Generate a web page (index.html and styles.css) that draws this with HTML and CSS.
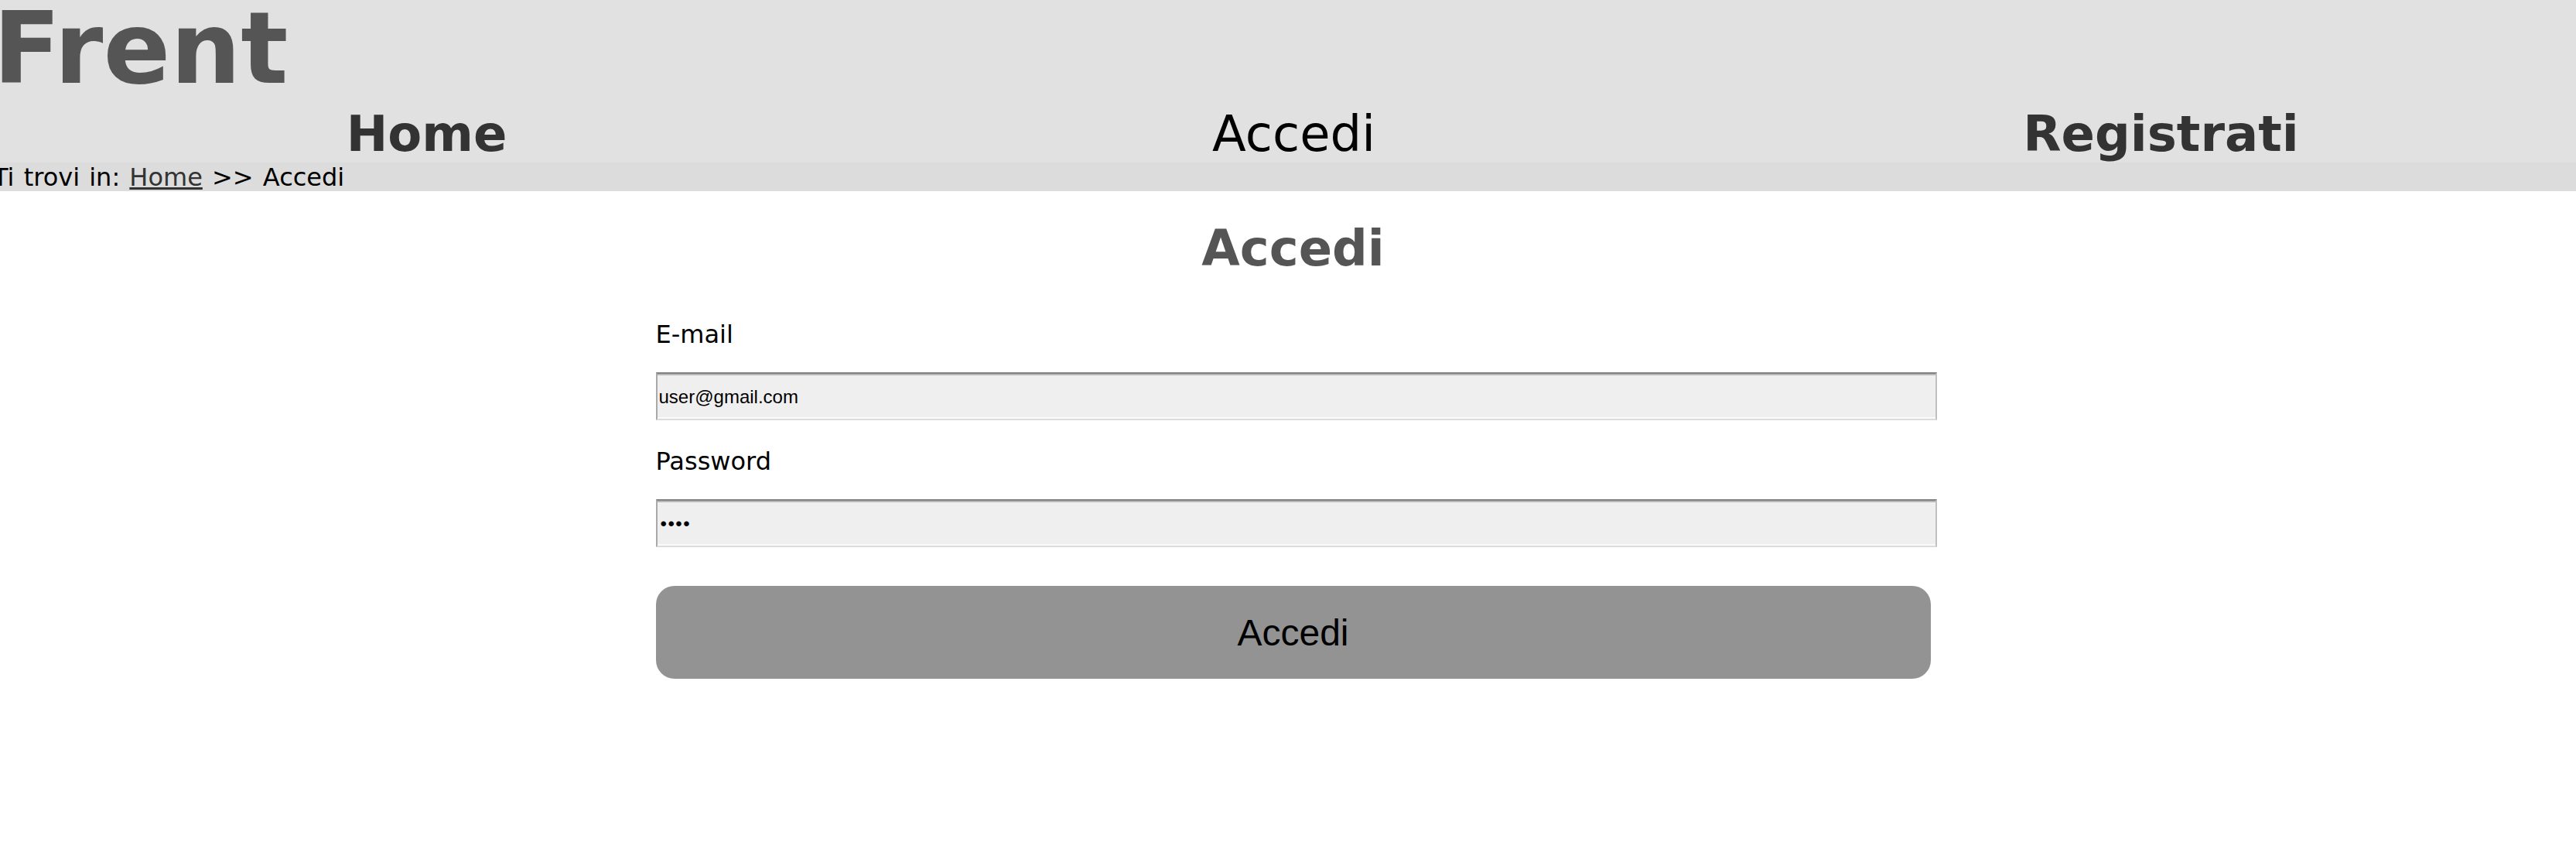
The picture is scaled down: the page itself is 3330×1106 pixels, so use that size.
FILE: index.html
```html
<!DOCTYPE html>
<html lang="it">
<head>
<meta charset="utf-8">
<title>Frent - Accedi</title>
<link rel="stylesheet" href="styles.css">
</head>
<body>
<header class="site-header">
  <h1 class="logo">Frent</h1>
  <nav class="main-nav">
    <ul class="nav-list">
      <li><a class="nav-link" href="#">Home</a></li>
      <li><span class="nav-current">Accedi</span></li>
      <li><a class="nav-link" href="#">Registrati</a></li>
    </ul>
  </nav>
  <div class="breadcrumb">Ti trovi in: <a href="#" class="crumb-link">Home</a> &gt;&gt; Accedi</div>
</header>
<main class="content">
  <h2 class="page-title">Accedi</h2>
  <form class="login-form">
    <label class="field-label" for="email">E-mail</label>
    <input class="field-input" id="email" type="email" value="user@gmail.com">
    <label class="field-label" for="password">Password</label>
    <input class="field-input field-password" id="password" type="password" value="abcd">
    <button class="submit-btn" type="button">Accedi</button>
  </form>
</main>
</body>
</html>
```
FILE: styles.css
```css
html, body {
  margin: 0;
  padding: 0;
}

body {
  font-family: "DejaVu Sans", Verdana, sans-serif;
  background: #ffffff;
  color: #000000;
  overflow-x: hidden;
}

.site-header {
  background: #e1e1e1;
  margin: 0 -24px 0 -9px;
}

.logo {
  margin: 0;
  font-size: 128px;
  line-height: 126px;
  font-weight: bold;
  color: #555555;
}

.main-nav {
  margin-top: 10px;
}

.nav-list {
  list-style: none;
  margin: 0;
  padding: 0;
  display: grid;
  grid-template-columns: repeat(3, 1fr);
  text-align: center;
  font-size: 64px;
  line-height: 74px;
}

.nav-link {
  color: #333333;
  font-weight: bold;
  text-decoration: none;
}

.nav-current {
  color: #000000;
}

.breadcrumb {
  background: #dcdcdc;
  font-size: 32px;
  line-height: 36px;
  padding-top: 1px;
  word-spacing: 2px;
}

.crumb-link {
  color: #333333;
}

.content {
  padding-left: 13px;
}

.page-title {
  margin: 37px 0 0;
  text-align: center;
  font-size: 64px;
  font-weight: bold;
  color: #555555;
  line-height: normal;
}

.login-form {
  width: 1648px;
  margin: 55px auto 0;
}

.field-label {
  display: block;
  font-size: 32px;
  line-height: normal;
  margin-bottom: 30px;
}

.field-input {
  display: block;
  box-sizing: content-box;
  width: 100%;
  height: 54px;
  padding: 3px 2px 1px;
  margin: 0 0 34px;
  font-family: "Liberation Sans", Arial, sans-serif;
  font-size: 24px;
  color: #000000;
  background: #efefef;
  border-style: solid;
  border-width: 2px;
  border-color: #808080 #c0c0c0 #dcdcdc #a9a9a9;
  box-shadow: inset 0 2px 0 #b8b8b8, inset 0 -2px 0 #fafafa;
  outline: none;
}

.field-password {
  padding-left: 4px;
  width: calc(100% - 2px);
  letter-spacing: 1.5px;
}

.submit-btn {
  display: block;
  width: 100%;
  height: 120px;
  margin-top: 50px;
  padding: 0;
  border: none;
  border-radius: 24px;
  background: #939393;
  font-family: "Liberation Sans", Arial, sans-serif;
  font-size: 48px;
  color: #000000;
}
```
